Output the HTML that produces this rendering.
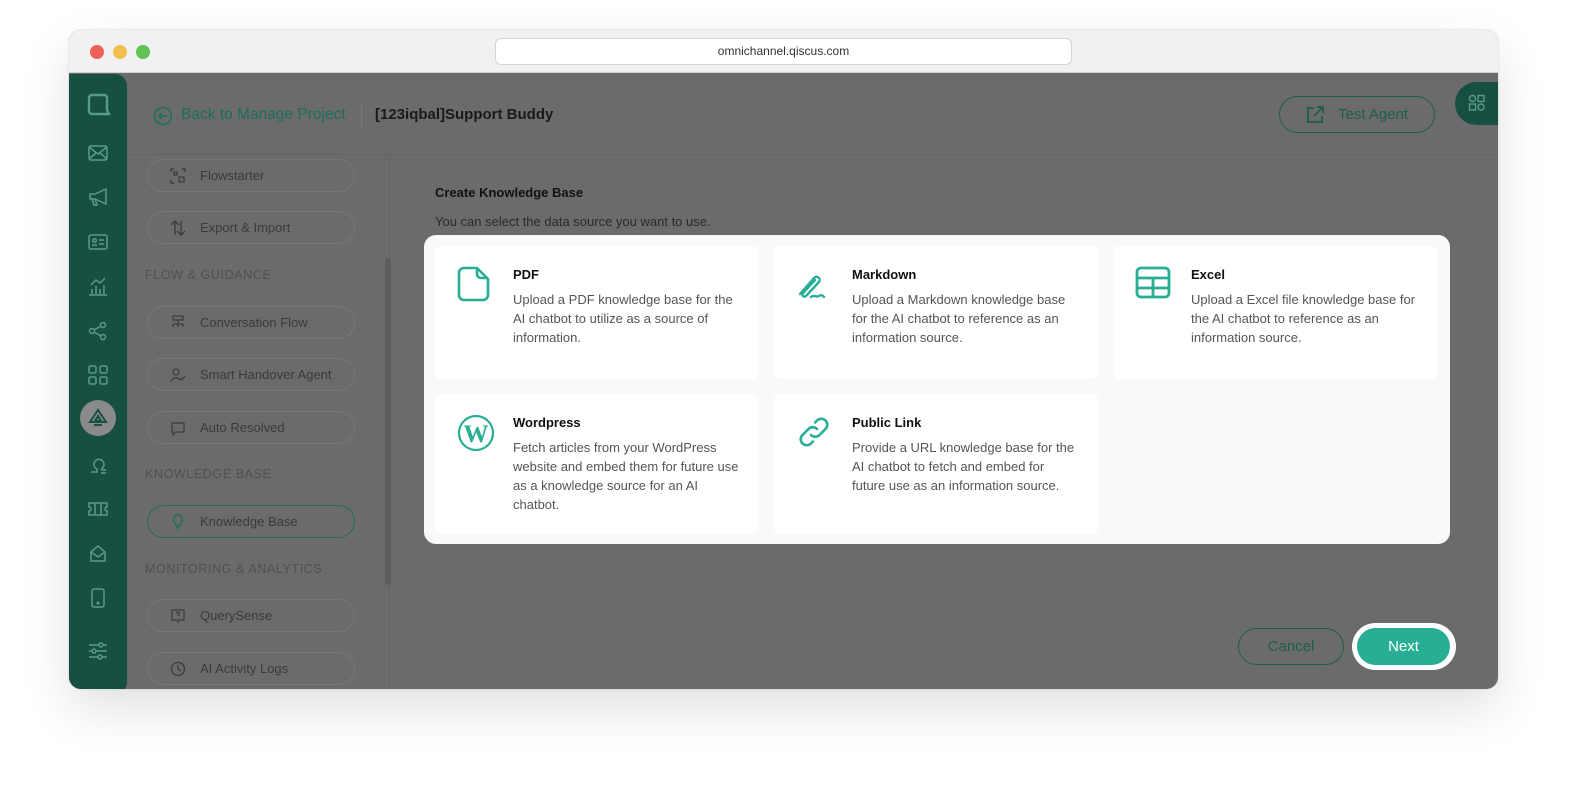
<!DOCTYPE html>
<html><head><meta charset="utf-8"><style>
*{box-sizing:border-box;margin:0;padding:0}
body{width:1580px;height:804px;background:#fff;font-family:"Liberation Sans",sans-serif;position:relative;overflow:hidden}
.abs{position:absolute}
.win{left:69px;top:30px;width:1429px;height:659px;border-radius:12px;background:#6b6b6b;overflow:hidden;box-shadow:0 20px 50px rgba(0,0,0,.12),0 0 2px rgba(0,0,0,.15)}
.tb{left:0;top:0;width:1429px;height:43px;background:#f1f1f1;border-bottom:1px solid #d0d0d0}
.dot{top:15px;width:14px;height:14px;border-radius:50%}
.url{left:426px;top:8px;width:577px;height:27px;background:#fff;border:1px solid #d4d4d4;border-radius:6px;font-size:12px;color:#333;text-align:center;line-height:25px}
.rail{left:0;top:44px;width:58px;height:620px;background:#174f43;border-radius:0 12px 12px 0}
.pill{left:78px;width:208px;height:33px;border:1px solid #777;border-radius:17px;font-size:13px;color:#3a3a3a;line-height:31px;padding-left:52px}
.pill svg{position:absolute;left:22px;top:8px}
.sec{left:76px;font-size:12.5px;color:#505050;letter-spacing:.6px}
.modal{left:355px;top:205px;width:1026px;height:309px;background:#f9f9f9;border-radius:12px}
.card{width:324px;background:#fff;border-radius:6px}
.card h3{position:absolute;left:78px;top:21px;font-size:13px;font-weight:bold;color:#111}
.card p{position:absolute;left:78px;top:44px;width:226px;font-size:13px;line-height:19px;color:#555}
.card svg{position:absolute;left:22px;top:20px}
.ri{left:18px;width:22px;height:22px}
</style></head><body>
<div class="abs win">
 <div class="abs tb">
  <div class="abs dot" style="left:21px;background:#ee5f57"></div>
  <div class="abs dot" style="left:44px;background:#f4bd4f"></div>
  <div class="abs dot" style="left:67px;background:#5fc454"></div>
  <div class="abs url">omnichannel.qiscus.com</div>
 </div>
 <div class="abs" style="left:58px;top:124px;width:1371px;height:1px;background:#646464"></div>
 <div class="abs" style="left:320px;top:125px;width:1px;height:540px;background:#646464"></div>
 <svg class="abs" style="left:84px;top:76px" width="20" height="20" viewBox="0 0 20 20"><circle cx="10" cy="10" r="8.5" fill="none" stroke="#1d6e5a" stroke-width="1.6"/><path d="M14 10H6M9 7l-3 3 3 3" fill="none" stroke="#1d6e5a" stroke-width="1.6"/></svg>
 <div class="abs" style="left:112px;top:76px;font-size:15.5px;color:#1d6e5a">Back to Manage Project</div>
 <div class="abs" style="left:292px;top:73px;width:1px;height:26px;background:#7a7a7a"></div>
 <div class="abs" style="left:306px;top:76px;font-size:15px;font-weight:bold;color:#1a1a1a">[123iqbal]Support Buddy</div>
 <div class="abs" style="left:1210px;top:66px;width:156px;height:37px;border:1px solid #1d5e4e;border-radius:19px;font-size:15px;color:#1d5e4e;line-height:35px;padding-left:58px">Test Agent
  <svg class="abs" style="left:25px;top:8px" width="20" height="20" viewBox="0 0 20 20"><path d="M9 3H3v14h14v-6M12 2h6v6M18 2l-9 9" fill="none" stroke="#1d5e4e" stroke-width="1.8"/></svg></div>
 <div class="abs" style="left:1386px;top:52px;width:60px;height:43px;background:#174f43;border-radius:22px 0 0 22px">
  <svg class="abs" style="left:13px;top:12px" width="18" height="18" viewBox="0 0 18 18" fill="none" stroke="#5a9a88" stroke-width="1.4"><circle cx="4.5" cy="4.5" r="3"/><rect x="10" y="1.5" width="6" height="6"/><rect x="1.5" y="10" width="6" height="6"/><circle cx="13" cy="13" r="3"/></svg></div>
 <div class="abs rail">
  <svg class="abs" style="left:16px;top:18px" width="26" height="26" viewBox="0 0 26 26"><path d="M4 6a3 3 0 0 1 3-3h12a3 3 0 0 1 3 3v12l2 4h-17a3 3 0 0 1-3-3z" fill="none" stroke="#5a9a88" stroke-width="2.4"/></svg>
  <svg class="abs ri" style="top:68px" viewBox="0 0 22 22" fill="none" stroke="#5a9a88" stroke-width="1.5"><rect x="2" y="4" width="18" height="14" rx="2"/><path d="M2 5l9 7 9-7M2 17l7-6M20 17l-7-6"/></svg>
  <svg class="abs ri" style="top:112px" viewBox="0 0 22 22" fill="none" stroke="#5a9a88" stroke-width="1.5"><path d="M3 8h5l11-5v15L8 13H3zM5 13l2 6h3l-2-6"/></svg>
  <svg class="abs ri" style="top:157px" viewBox="0 0 22 22" fill="none" stroke="#5a9a88" stroke-width="1.5"><rect x="2" y="4" width="18" height="14" rx="2"/><circle cx="7.5" cy="9.5" r="1.8"/><path d="M5 14h5M12 9h5M12 13h5"/></svg>
  <svg class="abs ri" style="top:201px" viewBox="0 0 22 22" fill="none" stroke="#5a9a88" stroke-width="1.5"><path d="M2 20h18M5 19v-5M9 19v-8M13 19v-5M17 19v-9M4 10l5-5 4 3 5-5"/></svg>
  <svg class="abs ri" style="top:246px" viewBox="0 0 22 22" fill="none" stroke="#5a9a88" stroke-width="1.5"><circle cx="5" cy="11" r="2.5"/><circle cx="16" cy="5" r="2.5"/><circle cx="16" cy="17" r="2.5"/><path d="M7 10l7-4M7 12l7 4"/></svg>
  <svg class="abs ri" style="top:290px" viewBox="0 0 22 22" fill="none" stroke="#5a9a88" stroke-width="1.5"><rect x="2" y="2" width="7" height="7" rx="1.5"/><rect x="13" y="2" width="7" height="7" rx="1.5"/><rect x="2" y="13" width="7" height="7" rx="1.5"/><rect x="13" y="13" width="7" height="7" rx="1.5"/></svg>
  <div class="abs" style="left:11px;top:326px;width:36px;height:36px;border-radius:50%;background:#8a8a8a"><svg class="abs" style="left:7px;top:7px" width="22" height="22" viewBox="0 0 22 22" fill="none" stroke="#174f43" stroke-width="2"><path d="M11 3L3 15h16zM7 18h8M11 9l-3 5h6z"/></svg></div>
  <svg class="abs ri" style="top:380px" viewBox="0 0 22 22" fill="none" stroke="#5a9a88" stroke-width="1.5"><path d="M4 18h6v-3a5 5 0 1 1 4 0M14 16h5M14 19h5"/></svg>
  <svg class="abs ri" style="top:424px" viewBox="0 0 22 22" fill="none" stroke="#5a9a88" stroke-width="1.5"><path d="M2 5h18v4a2 2 0 0 0 0 4v4H2v-4a2 2 0 0 0 0-4zM8 5v12M14 5v12"/></svg>
  <svg class="abs ri" style="top:469px" viewBox="0 0 22 22" fill="none" stroke="#5a9a88" stroke-width="1.5"><path d="M4 9l7-6 7 6v9H4zM4 9l7 5 7-5"/></svg>
  <svg class="abs ri" style="top:513px" viewBox="0 0 22 22" fill="none" stroke="#5a9a88" stroke-width="1.5"><rect x="5" y="2" width="12" height="18" rx="2"/><circle cx="11" cy="16" r=".8"/></svg>
  <svg class="abs ri" style="top:566px" viewBox="0 0 22 22" fill="none" stroke="#5a9a88" stroke-width="1.5"><path d="M2 5h18M2 11h18M2 17h18"/><circle cx="14" cy="5" r="2" fill="#174f43"/><circle cx="7" cy="11" r="2" fill="#174f43"/><circle cx="13" cy="17" r="2" fill="#174f43"/></svg>
 </div>
 <div class="abs pill" style="top:129px">Flowstarter<svg width="16" height="16" viewBox="0 0 16 16" fill="none" stroke="#3a3a3a" stroke-width="1.2"><path d="M1 4V1h3M12 1h3v3M1 12v3h3"/><rect x="4" y="4" width="3" height="3"/><rect x="9" y="9" width="5" height="5"/></svg></div>
 <div class="abs pill" style="top:181px">Export &amp; Import<svg width="16" height="16" viewBox="0 0 16 16" fill="none" stroke="#3a3a3a" stroke-width="1.3"><path d="M5 15V1M1 5l4-4 4 4M11 1v14M7 11l4 4 4-4"/></svg></div>
 <div class="abs sec" style="top:238px">FLOW &amp; GUIDANCE</div>
 <div class="abs pill" style="top:276px">Conversation Flow<svg width="16" height="16" viewBox="0 0 16 16" fill="none" stroke="#3a3a3a" stroke-width="1.2"><rect x="3" y="1" width="10" height="4"/><path d="M8 5v4M3 9h10M3 9v3M8 9v3M13 9v3"/></svg></div>
 <div class="abs pill" style="top:328px">Smart Handover Agent<svg width="16" height="16" viewBox="0 0 16 16" fill="none" stroke="#3a3a3a" stroke-width="1.2"><circle cx="6" cy="5" r="3"/><path d="M1 15a5 5 0 0 1 9-2M10 11l2 2 3-4"/></svg></div>
 <div class="abs pill" style="top:381px">Auto Resolved<svg width="16" height="16" viewBox="0 0 16 16" fill="none" stroke="#3a3a3a" stroke-width="1.2"><path d="M2 3h12v9H6l-3 3v-3H2z"/><path d="M5 7.5h.1M8 7.5h.1M11 7.5h.1"/></svg></div>
 <div class="abs sec" style="top:437px">KNOWLEDGE BASE</div>
 <div class="abs pill" style="top:475px;border-color:#1d6e5a">Knowledge Base<svg width="16" height="16" viewBox="0 0 16 16" fill="none" stroke="#1d6e5a" stroke-width="1.2"><path d="M8 1a4.5 4.5 0 0 0-2.5 8.2V11h5V9.2A4.5 4.5 0 0 0 8 1zM6 13h4M7 15h2"/></svg></div>
 <div class="abs sec" style="top:532px">MONITORING &amp; ANALYTICS</div>
 <div class="abs pill" style="top:569px">QuerySense<svg width="16" height="16" viewBox="0 0 16 16" fill="none" stroke="#3a3a3a" stroke-width="1.2"><path d="M2 2h12v10H9l-1 2-1-2H2z"/><path d="M6.5 5.5a1.5 1.5 0 1 1 2 1.4V8M8 9.8v.1"/></svg></div>
 <div class="abs pill" style="top:622px">AI Activity Logs<svg width="16" height="16" viewBox="0 0 16 16" fill="none" stroke="#3a3a3a" stroke-width="1.3"><circle cx="8" cy="8" r="6.5"/><path d="M8 4v4l3 2"/></svg></div>
 <div class="abs" style="left:316px;top:228px;width:6px;height:327px;border-radius:3px;background:#5d5d5d"></div>
 <div class="abs" style="left:366px;top:155px;font-size:13px;font-weight:bold;color:#111">Create Knowledge Base</div>
 <div class="abs" style="left:366px;top:184px;font-size:13px;color:#2a2a2a">You can select the data source you want to use.</div>
 <div class="abs modal">
  <div class="abs card" style="left:11px;top:11px;height:133px"><svg width="34" height="36" viewBox="0 0 34 36" fill="none" stroke="#27ae94" stroke-width="2.6"><path d="M7 2h13l11 11v16a5 5 0 0 1-5 5H7a5 5 0 0 1-5-5V7a5 5 0 0 1 5-5zM20 2v6a4 4 0 0 0 4 4h7"/></svg><h3>PDF</h3><p>Upload a PDF knowledge base for the AI chatbot to utilize as a source of information.</p></div>
  <div class="abs card" style="left:350px;top:11px;height:133px"><svg width="34" height="36" viewBox="0 0 34 36" fill="none" stroke="#27ae94" stroke-width="2.4" stroke-linecap="round"><path d="M4 28l14-16a3 3 0 0 1 5 4L10 30a2 2 0 0 1-3-3l12-13M15 31c3-3 5 1 8-1s4 0 5 1"/></svg><h3>Markdown</h3><p>Upload a Markdown knowledge base for the AI chatbot to reference as an information source.</p></div>
  <div class="abs card" style="left:689px;top:11px;height:133px"><svg width="36" height="34" viewBox="0 0 36 34" fill="none" stroke="#27ae94" stroke-width="2.8"><rect x="2" y="2" width="32" height="29" rx="4"/><path d="M2 12h32M2 22h32M18 12v19"/></svg><h3>Excel</h3><p>Upload a Excel file knowledge base for the AI chatbot to reference as an information source.</p></div>
  <div class="abs card" style="left:11px;top:159px;height:140px"><svg width="38" height="38" viewBox="0 0 38 38"><circle cx="19" cy="19" r="17" fill="none" stroke="#27ae94" stroke-width="2.2"/><text x="19" y="28" text-anchor="middle" font-family="Liberation Serif,serif" font-size="25" font-weight="bold" fill="#27ae94">W</text></svg><h3>Wordpress</h3><p>Fetch articles from your WordPress website and embed them for future use as a knowledge source for an AI chatbot.</p></div>
  <div class="abs card" style="left:350px;top:159px;height:140px"><svg width="36" height="36" viewBox="0 0 36 36" fill="none" stroke="#27ae94" stroke-width="2.6" stroke-linecap="round"><path d="M15 21a6 6 0 0 0 8.5 0l6-6a6 6 0 0 0-8.5-8.5l-2 2M21 15a6 6 0 0 0-8.5 0l-6 6a6 6 0 0 0 8.5 8.5l2-2"/></svg><h3>Public Link</h3><p>Provide a URL knowledge base for the AI chatbot to fetch and embed for future use as an information source.</p></div>
 </div>
 <div class="abs" style="left:1169px;top:598px;width:106px;height:37px;border:1px solid #1d5e4e;border-radius:19px;font-size:15px;color:#1d5e4e;text-align:center;line-height:35px">Cancel</div>
 <div class="abs" style="left:1283px;top:593px;width:104px;height:47px;border-radius:24px;background:#fff"></div>
 <div class="abs" style="left:1288px;top:598px;width:93px;height:37px;border-radius:19px;background:#27ae94;font-size:15px;color:#fff;text-align:center;line-height:37px">Next</div>
</div>
</body></html>
